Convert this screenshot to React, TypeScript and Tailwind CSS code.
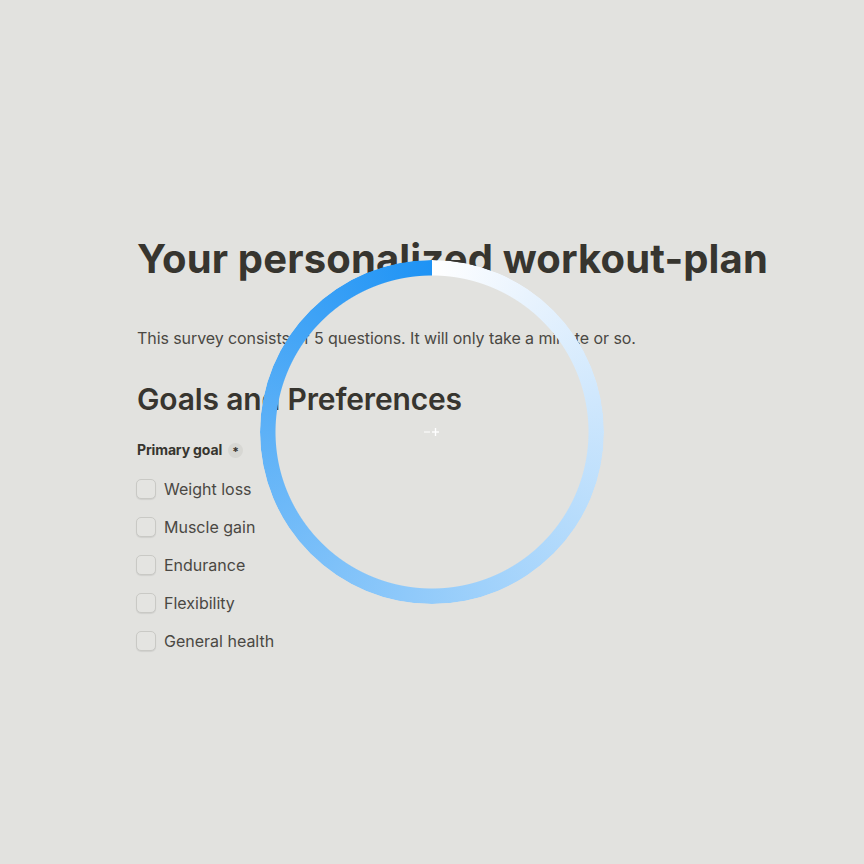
import React from "react";

const options = ["Weight loss", "Muscle gain", "Endurance", "Flexibility", "General health"];

export default function App() {
  return (
    <div
      className="relative w-[864px] h-[864px] overflow-hidden bg-[#e2e2df] text-[#37352f]"
      style={{ fontFamily: "Inter, 'Noto Sans', sans-serif" }}
    >
      <div className="ml-[137px] w-[680px] pt-[235px]">
        <h1 className="text-[40px] leading-[48px] font-bold tracking-[0.004em] text-[#37352f]">
          Your personalized workout-plan
        </h1>
        <p className="mt-[43px] text-[16px] leading-[24px] tracking-[-0.005em] text-[#4a4843]">
          This survey consists of 5 questions. It will only take a minute or so.
        </p>
        <h2 className="mt-[31px] text-[30px] leading-[36px] font-semibold tracking-[-0.005em] text-[#37352f]">
          Goals and Preferences
        </h2>
        <div className="mt-[23px] flex items-center gap-[6px]">
          <span className="text-[14px] leading-[20px] font-bold tracking-[-0.01em] text-[#37352f]">Primary goal</span>
          <span className="flex h-[15px] w-[15px] items-center justify-center rounded-full bg-[#d7d7d3] pt-[3px] text-[12px] font-bold leading-none text-[#37352f]">
            *
          </span>
        </div>
        <div className="mt-[17px] flex flex-col gap-[14px]">
          {options.map((o) => (
            <label key={o} className="flex items-center gap-[8px] h-[24px]">
              <span className="-ml-[1px] h-[20px] w-[20px] rounded-[5px] border border-[#c9c9c5] bg-[#e4e4e1] shadow-[0_1px_1px_rgba(0,0,0,0.08)]" />
              <span className="text-[16px] leading-[24px] text-[#4a4843]">{o}</span>
            </label>
          ))}
        </div>
      </div>

      <div className="absolute left-[260px] top-[260px] h-[344px] w-[344px] rounded-full bg-[conic-gradient(from_0deg,#ffffff,#e8f3fe_10%,#9fd1fb_45%,#5db1f7_75%,#1e93f5)] [mask:radial-gradient(farthest-side,transparent_calc(100%-16px),#000_calc(100%-15px))]" />

      <svg className="absolute left-[423px] top-[427px]" width="18" height="10" viewBox="0 0 18 10">
        <line x1="1" y1="5" x2="7" y2="5" stroke="#ffffff" strokeWidth="1" />
        <line x1="9" y1="5" x2="16" y2="5" stroke="#ffffff" strokeWidth="1.4" />
        <line x1="12.5" y1="1" x2="12.5" y2="9" stroke="#ffffff" strokeWidth="1.4" />
      </svg>
    </div>
  );
}
